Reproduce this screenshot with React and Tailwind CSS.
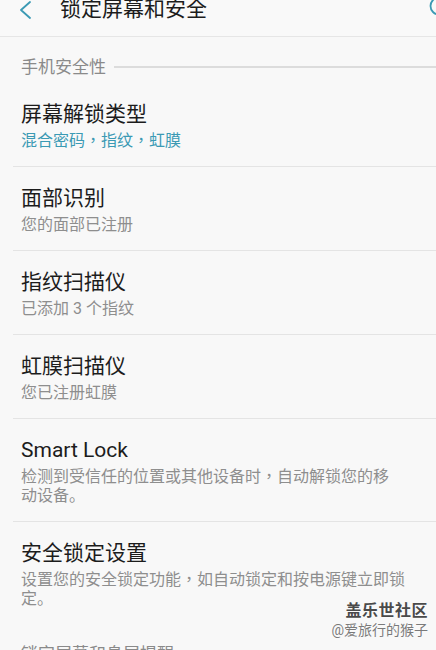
import React from 'react';

const FONT = { fontFamily: 'Roboto, "Noto Sans CJK SC", sans-serif' };

const ROWS = [
  { title: '屏幕解锁类型', sub: ['混合密码，指纹，虹膜'], accent: true },
  { title: '面部识别', sub: ['您的面部已注册'] },
  { title: '指纹扫描仪', sub: ['已添加 3 个指纹'] },
  { title: '虹膜扫描仪', sub: ['您已注册虹膜'] },
  { title: 'Smart Lock', sub: ['检测到受信任的位置或其他设备时，自动解锁您的移', '动设备。'] },
  { title: '安全锁定设置', sub: ['设置您的安全锁定功能，如自动锁定和按电源键立即锁', '定。'], last: true },
];

// the phone's font centres its full-width commas, the TC face does the same
function Line({ text }) {
  const parts = text.split('，');
  return (
    <div className="h-[19px] overflow-visible whitespace-nowrap">
      {parts.map((p, i) => (
        <React.Fragment key={i}>
          {i > 0 && <span className="leading-[0]" style={{ fontFamily: '"Noto Sans CJK TC", sans-serif' }}>，</span>}
          {p}
        </React.Fragment>
      ))}
    </div>
  );
}

function SectionHeader({ label }) {
  return (
    <div className="flex items-center gap-[8px] pl-[21px] pt-[21px] pb-[7px]">
      <span className="text-[17px] leading-[18px] text-[#8a8a8a] whitespace-nowrap">{label}</span>
      <div className="flex-1 h-[1.5px] bg-[#dcdcdc]" />
    </div>
  );
}

function Row({ title, sub, accent, last }) {
  return (
    <div>
      <div className="pl-[21px] pr-[21px] pt-[19px] pb-[16px]">
        <div className="text-[21px] leading-[24px] text-[#1c1c1c]">{title}</div>
        <div className={'mt-[5px] text-[16px] leading-[19px] ' + (accent ? 'text-[#3b9ab4]' : 'text-[#8e8e8e]')}>
          {sub.map((s, i) => (
            <Line key={i} text={s} />
          ))}
        </div>
      </div>
      {!last && <div className="ml-[13px] h-px bg-[#e4e4e4]" />}
    </div>
  );
}

export default function App() {
  return (
    <div className="relative w-[436px] h-[650px] overflow-hidden bg-[#f8f8f8]" style={FONT}>
      <header className="relative h-[37px] border-b border-[#e6e6e6] bg-[#f9f9f9]">
        <div className="flex items-center h-[19px]">
          <svg width="12" height="18" viewBox="0 0 12 18" className="ml-[19px] mt-[1px]">
            <polyline points="11,1 2,9 11,17" fill="none" stroke="#3b9ab4" strokeWidth="1.8" strokeLinejoin="round" strokeLinecap="round" />
          </svg>
          <span className="ml-[29px] text-[21px] leading-[19px] text-[#1c1c1c]">锁定屏幕和安全</span>
        </div>
        <svg width="20" height="24" viewBox="0 0 20 24" className="absolute left-[429px] top-[-4px]">
          <circle cx="10" cy="10" r="8.5" fill="none" stroke="#3b9ab4" strokeWidth="1.8" />
        </svg>
      </header>

      <SectionHeader label="手机安全性" />
      {ROWS.map((r) => (
        <Row key={r.title} {...r} />
      ))}
      <SectionHeader label="锁定屏幕和息屏提醒" />

      <div className="absolute right-[8px] bottom-[11px] flex flex-col items-end">
        <span className="text-[16px] leading-[20px] font-bold text-[#4a4a4a] tracking-[0.5px] [text-shadow:0_0_2px_#ffffff]">盖乐世社区</span>
        <span className="text-[14px] leading-[18px] text-[#7a7a7a] [text-shadow:0_0_2px_#ffffff]">@爱旅行的猴子</span>
      </div>
    </div>
  );
}
